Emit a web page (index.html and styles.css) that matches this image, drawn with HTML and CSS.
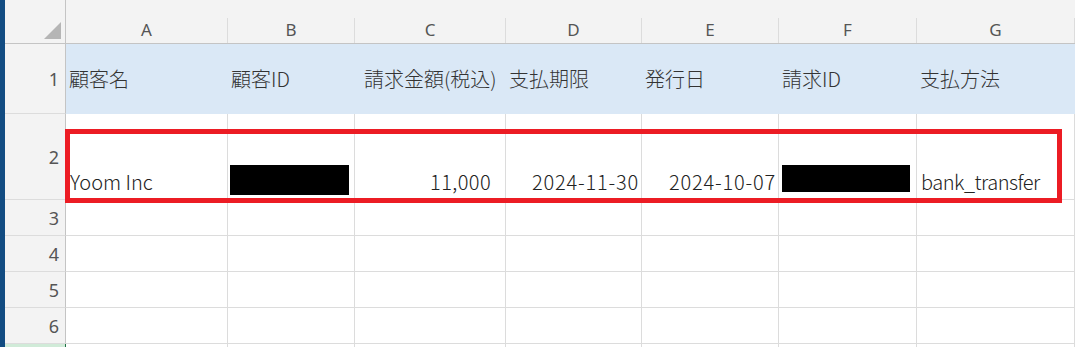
FILE: index.html
```html
<!DOCTYPE html>
<html lang="ja">
<head>
<meta charset="utf-8">
<title>Sheet</title>
<link rel="stylesheet" href="styles.css">
</head>
<body>
<div class="app">
  <div class="strip"></div>
  <div class="sheet">
    <div class="corner"><svg class="tri" width="17" height="17" viewBox="0 0 17 17"><polygon points="17,0 17,17 0,17" fill="#b5b5b5"/></svg></div>
    <div class="colhead"><div class="lbl">A</div></div>
    <div class="colhead"><div class="lbl">B</div></div>
    <div class="colhead"><div class="lbl">C</div></div>
    <div class="colhead"><div class="lbl">D</div></div>
    <div class="colhead"><div class="lbl">E</div></div>
    <div class="colhead"><div class="lbl">F</div></div>
    <div class="colhead"><div class="lbl">G</div></div>

    <div class="rowhead">1</div>
    <div class="cell head">顧客名</div>
    <div class="cell head">顧客ID</div>
    <div class="cell head head-c">請求金額(税込)</div>
    <div class="cell head">支払期限</div>
    <div class="cell head">発行日</div>
    <div class="cell head">請求ID</div>
    <div class="cell head">支払方法</div>

    <div class="rowhead">2</div>
    <div class="cell data">Yoom Inc</div>
    <div class="cell data"><span class="redact redact-b"></span></div>
    <div class="cell data num num-amount">11,000</div>
    <div class="cell data num num-date">2024-11-30</div>
    <div class="cell data num num-date">2024-10-07</div>
    <div class="cell data"><span class="redact redact-f"></span></div>
    <div class="cell data latin">bank_transfer</div>

    <div class="rowhead">3</div>
    <div class="cell"></div><div class="cell"></div><div class="cell"></div><div class="cell"></div><div class="cell"></div><div class="cell"></div><div class="cell"></div>
    <div class="rowhead">4</div>
    <div class="cell"></div><div class="cell"></div><div class="cell"></div><div class="cell"></div><div class="cell"></div><div class="cell"></div><div class="cell"></div>
    <div class="rowhead">5</div>
    <div class="cell"></div><div class="cell"></div><div class="cell"></div><div class="cell"></div><div class="cell"></div><div class="cell"></div><div class="cell"></div>
    <div class="rowhead">6</div>
    <div class="cell"></div><div class="cell"></div><div class="cell"></div><div class="cell"></div><div class="cell"></div><div class="cell"></div><div class="cell"></div>
    <div class="rowhead sel"></div>
    <div class="cell"></div><div class="cell"></div><div class="cell"></div><div class="cell"></div><div class="cell"></div><div class="cell"></div><div class="cell"></div>

    <div class="highlight"></div>
  </div>
</div>
</body>
</html>
```

FILE: styles.css
```css
* { box-sizing: border-box; }
html, body { margin: 0; padding: 0; background: #fff; }
body { width: 1075px; height: 347px; overflow: hidden; font-family: "Noto Sans CJK JP", "Noto Sans", sans-serif; }

.app { display: flex; height: 347px; overflow: hidden; }
.strip { width: 5px; flex: none; background: #124c82; }

.sheet {
  position: relative;
  flex: 1;
  display: grid;
  grid-template-columns: 61px 162px 127px 151px 136px 137px 138px 1fr;
  grid-template-rows: 44px 70px 86px 36px 36px 36px 36px 36px;
}

.corner {
  background: #f3f3f3;
  border-right: 1px solid #c4c4c4;
  border-bottom: 1px solid #c4c4c4;
  display: flex;
  justify-content: flex-end;
  align-items: flex-end;
  padding: 0 4px 4px 0;
}
.tri { display: block; }

.colhead {
  background: #f3f3f3;
  border-bottom: 1px solid #c4c4c4;
  display: flex;
  align-items: flex-end;
  padding-top: 18px;
}
.colhead .lbl {
  width: 100%;
  height: 25px;
  border-right: 1px solid #dcdcdc;
  text-align: center;
  font-family: "Noto Sans", sans-serif;
  font-size: 17px;
  line-height: 24px;
  color: #555;
}

.rowhead {
  background: #f3f3f3;
  border-right: 1px solid #c4c4c4;
  border-bottom: 1px solid #dcdcdc;
  display: flex;
  align-items: center;
  justify-content: flex-end;
  padding-right: 6px;
  font-family: "Noto Sans", sans-serif;
  font-size: 18px;
  color: #555;
}
.rowhead.sel { background: #d0ebd8; border-right-color: #1e7145; border-bottom-color: #d0ebd8; }

.cell {
  border-right: 1px solid #dcdcdc;
  border-bottom: 1px solid #dcdcdc;
  display: flex;
  font-size: 20px;
  font-weight: 300;
  color: #222;
  white-space: nowrap;
  min-width: 0;
}

.cell.head {
  background: #dae8f6;
  border-color: #dae8f6;
  align-items: center;
  padding-left: 3px;
  color: #333;
  line-height: 26px;
}
.cell.head-c { padding-left: 9px; }

.cell.data {
  align-items: flex-end;
  padding: 0 3px 4px 4px;
  line-height: 26px;
}
.cell.latin { letter-spacing: -0.5px; }
.cell.num { justify-content: flex-end; }
.cell.num-date { letter-spacing: 0.8px; padding-right: 2px; }
.cell.num-amount { letter-spacing: 0.4px; padding-right: 14px; }

.redact { display: block; background: #000; }
.redact-b { width: 119px; height: 30px; margin: 0 0 0 -2px; }
.redact-f { width: 128px; height: 27px; margin: 0 0 3px -1px; }

.highlight {
  position: absolute;
  left: 60px;
  top: 129px;
  width: 997px;
  height: 74px;
  border: 5px solid #ec1c24;
}
```
